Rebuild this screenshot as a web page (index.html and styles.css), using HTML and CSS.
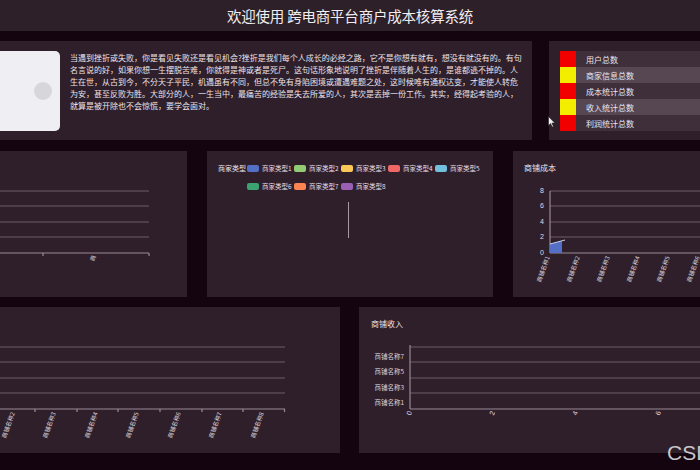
FILE: index.html
```html
<!DOCTYPE html>
<html lang="zh">
<head>
<meta charset="utf-8">
<title>跨电商平台商户成本核算系统</title>
<link rel="stylesheet" href="styles.css">
</head>
<body>
<header class="topbar"><h1 class="title">欢迎使用 跨电商平台商户成本核算系统</h1></header>
<main class="board">
  <section class="row row-1">
    <div class="panel intro">
      <div class="card"><span class="dot"></span></div>
      <p class="intro-text">当遇到挫折或失败，你是看见失败还是看见机会?挫折是我们每个人成长的必经之路，它不是你想有就有，想没有就没有的。有句名言说的好，如果你想一生摆脱苦难，你就得是神或者是死尸。这句话形象地说明了挫折是伴随着人生的，是谁都逃不掉的。人生在世，从古到今，不分天子平民，机遇虽有不同，但总不免有身陷困境或遭遇难题之处，这时候唯有通权达变，才能使人转危为安，甚至反败为胜。大部分的人，一生当中，最痛苦的经验是失去所爱的人，其次是丢掉一份工作。其实，经得起考验的人，就算是被开除也不会惊慌，要学会面对。</p>
    </div>
    <div class="panel stats">
      <ul class="stat-list">
        <li class="stat odd"><span class="mark red"></span><span class="stat-label">用户总数</span></li>
        <li class="stat even"><span class="mark yellow"></span><span class="stat-label">商家信息总数</span></li>
        <li class="stat odd"><span class="mark red"></span><span class="stat-label">成本统计总数</span></li>
        <li class="stat even"><span class="mark yellow"></span><span class="stat-label">收入统计总数</span></li>
        <li class="stat odd"><span class="mark red"></span><span class="stat-label">利润统计总数</span></li>
      </ul>
    </div>
  </section>

  <section class="row row-2">
    <div class="panel p21">
      <svg class="chart" width="207" height="146" viewBox="0 0 207 146">
        <g class="grid">
          <line x1="0" y1="40" x2="169" y2="40"/>
          <line x1="0" y1="55" x2="169" y2="55"/>
          <line x1="0" y1="71" x2="169" y2="71"/>
          <line x1="0" y1="86" x2="169" y2="86"/>
        </g>
        <g class="axis">
          <line x1="0" y1="102" x2="169" y2="102"/>
          <line x1="63" y1="102" x2="63" y2="105"/>
          <line x1="169" y1="102" x2="169" y2="105"/>
        </g>
        <text class="lbl" x="116" y="105" text-anchor="end" transform="rotate(-70 116 105)">商</text>
      </svg>
    </div>

    <div class="panel p22">
      <div class="legend">
        <span class="legend-title">商家类型</span>
        <div class="legend-items">
          <span class="li"><i class="sw c1"></i>商家类型1</span>
          <span class="li"><i class="sw c2"></i>商家类型2</span>
          <span class="li"><i class="sw c3"></i>商家类型3</span>
          <span class="li"><i class="sw c4"></i>商家类型4</span>
          <span class="li"><i class="sw c5"></i>商家类型5</span>
          <span class="li"><i class="sw c6"></i>商家类型6</span>
          <span class="li"><i class="sw c7"></i>商家类型7</span>
          <span class="li"><i class="sw c8"></i>商家类型8</span>
        </div>
      </div>
      <div class="pie-line"></div>
    </div>

    <div class="panel p23">
      <div class="ptitle">商铺成本</div>
      <svg class="chart" width="220" height="124" viewBox="0 0 220 124">
        <g class="grid">
          <line x1="37" y1="18" x2="220" y2="18"/>
          <line x1="37" y1="33" x2="220" y2="33"/>
          <line x1="37" y1="49" x2="220" y2="49"/>
          <line x1="37" y1="64" x2="220" y2="64"/>
        </g>
        <g class="axis">
          <line x1="37" y1="80" x2="220" y2="80"/>
          <line x1="37" y1="18" x2="37" y2="80"/>
        </g>
        <polygon points="37,80 37,71 49,68 49,80" fill="#5470c6"/>
        <line x1="37" y1="71" x2="52" y2="67" stroke="#c9d2f0" stroke-width="1"/>
        <g class="num">
          <text x="31" y="20" text-anchor="end">8</text>
          <text x="31" y="35" text-anchor="end">6</text>
          <text x="31" y="51" text-anchor="end">4</text>
          <text x="31" y="66" text-anchor="end">2</text>
          <text x="31" y="82" text-anchor="end">0</text>
        </g>
        <g class="lbl">
          <text x="37" y="84" text-anchor="end" transform="rotate(-70 37 84)">商铺名称1</text>
          <text x="67" y="84" text-anchor="end" transform="rotate(-70 67 84)">商铺名称2</text>
          <text x="97" y="84" text-anchor="end" transform="rotate(-70 97 84)">商铺名称3</text>
          <text x="127" y="84" text-anchor="end" transform="rotate(-70 127 84)">商铺名称4</text>
          <text x="157" y="84" text-anchor="end" transform="rotate(-70 157 84)">商铺名称5</text>
          <text x="187" y="84" text-anchor="end" transform="rotate(-70 187 84)">商铺名称6</text>
        </g>
      </svg>
    </div>
  </section>

  <section class="row row-3">
    <div class="panel p31">
      <svg class="chart" width="360" height="146" viewBox="0 0 360 146">
        <g class="grid">
          <line x1="0" y1="40" x2="305" y2="40"/>
          <line x1="0" y1="55" x2="305" y2="55"/>
          <line x1="0" y1="71" x2="305" y2="71"/>
          <line x1="0" y1="86" x2="305" y2="86"/>
        </g>
        <g class="axis">
          <line x1="0" y1="102" x2="305" y2="102"/>
          <line x1="55" y1="102" x2="55" y2="105"/>
          <line x1="97" y1="102" x2="97" y2="105"/>
          <line x1="138" y1="102" x2="138" y2="105"/>
          <line x1="180" y1="102" x2="180" y2="105"/>
          <line x1="222" y1="102" x2="222" y2="105"/>
          <line x1="263" y1="102" x2="263" y2="105"/>
          <line x1="304.5" y1="102" x2="304.5" y2="105"/>
        </g>
        <g class="lbl">
          <text x="35" y="106" text-anchor="end" transform="rotate(-70 35 106)">商铺名称2</text>
          <text x="76" y="106" text-anchor="end" transform="rotate(-70 76 106)">商铺名称3</text>
          <text x="118" y="106" text-anchor="end" transform="rotate(-70 118 106)">商铺名称4</text>
          <text x="159" y="106" text-anchor="end" transform="rotate(-70 159 106)">商铺名称5</text>
          <text x="201" y="106" text-anchor="end" transform="rotate(-70 201 106)">商铺名称6</text>
          <text x="242" y="106" text-anchor="end" transform="rotate(-70 242 106)">商铺名称7</text>
          <text x="284" y="106" text-anchor="end" transform="rotate(-70 284 106)">商铺名称8</text>
        </g>
      </svg>
    </div>

    <div class="panel p32">
      <div class="ptitle">商铺收入</div>
      <svg class="chart" width="360" height="124" viewBox="0 0 360 124">
        <g class="grid">
          <line x1="51" y1="18" x2="360" y2="18"/>
          <line x1="51" y1="33" x2="360" y2="33"/>
          <line x1="51" y1="49" x2="360" y2="49"/>
          <line x1="51" y1="64" x2="360" y2="64"/>
        </g>
        <g class="axis">
          <line x1="51" y1="80" x2="360" y2="80"/>
          <line x1="51" y1="16" x2="51" y2="80"/>
        </g>
        <g class="lbl lbl-y">
          <text x="45" y="30" text-anchor="end">商铺名称7</text>
          <text x="45" y="45" text-anchor="end">商铺名称5</text>
          <text x="45" y="61" text-anchor="end">商铺名称3</text>
          <text x="45" y="76" text-anchor="end">商铺名称1</text>
        </g>
        <g class="num">
          <text x="53" y="83" text-anchor="end" transform="rotate(-70 53 83)">0</text>
          <text x="136" y="83" text-anchor="end" transform="rotate(-70 136 83)">2</text>
          <text x="219" y="83" text-anchor="end" transform="rotate(-70 219 83)">4</text>
          <text x="302" y="83" text-anchor="end" transform="rotate(-70 302 83)">6</text>
        </g>
      </svg>
    </div>
  </section>
</main>
<svg class="cursor" width="8" height="12" viewBox="0 0 8 12"><path d="M0.5 0.5 L0.5 9.5 L2.6 7.6 L4.2 11 L5.4 10.4 L3.9 7.1 L6.8 7.1 Z" fill="#f4f4f4" stroke="#222" stroke-width="0.6"/></svg>
<div class="watermark">CSDN</div>
</body>
</html>
```

FILE: styles.css
```css
* { box-sizing: border-box; }
html, body {
  margin: 0;
  padding: 0;
}
body {
  width: 700px;
  height: 470px;
  overflow: hidden;
  background: #13040f;
  font-family: "Noto Sans CJK SC", "Noto Sans", sans-serif;
  color: #ece4ea;
  position: relative;
}
.topbar {
  height: 31px;
  background: #2d2029;
  display: flex;
  align-items: center;
  justify-content: center;
}
.title {
  margin: 0;
  font-size: 14.5px;
  font-weight: 400;
  color: #f1edf0;
  letter-spacing: -0.2px;
}
.board {
  width: 760px;
  margin-left: -20px;
  padding-top: 10px;
  display: flex;
  flex-direction: column;
}
.row { display: flex; }
.row-1 { height: 99px; gap: 17px; }
.row-2 { height: 146px; gap: 20px; margin-top: 11px; }
.row-3 { height: 146px; gap: 19px; margin-top: 10px; }
.panel {
  background: #2e1f2b;
  flex: none;
}
/* row 1 */
.intro {
  width: 552px;
  display: flex;
  align-items: flex-start;
  padding: 10px 0 0 10px;
}
.card {
  width: 70px;
  height: 80px;
  background: #efeef3;
  border-radius: 5px;
  display: flex;
  align-items: center;
  justify-content: flex-end;
  padding-right: 8px;
  flex: none;
}
.dot {
  width: 18px;
  height: 18px;
  border-radius: 50%;
  background: #d7d6db;
}
.intro-text {
  margin: 1px 0 0 10px;
  width: 452px;
  font-size: 8px;
  line-height: 11.9px;
  color: #ebe3e9;
}
.stats {
  width: 200px;
  padding: 10px 0 0 11px;
}
.stat-list { list-style: none; margin: 0; padding: 0; }
.stat {
  display: flex;
  align-items: center;
  height: 16px;
}
.stat.odd { background: #3e2f3b; }
.stat.even { background: #564752; }
.mark { width: 16px; height: 16px; flex: none; }
.mark.red { background: #f20000; }
.mark.yellow { background: #f3ee00; }
.stat-label {
  padding-left: 10px;
  font-size: 8px;
  color: #eee6ec;
}
/* charts */
.chart { display: block; }
.grid line { stroke: #6e5d6a; stroke-width: 1.2; }
.axis line { stroke: #9a8a96; stroke-width: 1.2; }
.lbl { font-family: "Noto Sans CJK SC", sans-serif; font-size: 6px; fill: #dcd3da; }
.num { font-family: "Liberation Sans", sans-serif; font-size: 7px; fill: #e2dae0; }
.lbl-y { font-size: 6.5px; }
.ptitle {
  height: 22px;
  padding: 12px 0 0 11px;
  font-size: 8px;
  line-height: 10px;
  color: #ece4ea;
}
.p21 { width: 207px; }
.p22 { width: 286px; }
.p23 { width: 220px; }
.p31 { width: 360px; }
.p32 { width: 360px; }
.p32 .ptitle { padding-left: 12px; }
/* legend */
.legend {
  display: flex;
  padding: 12px 0 0 11px;
}
.legend-title {
  width: 29px;
  font-size: 7px;
  line-height: 10px;
  white-space: nowrap;
  flex: none;
}
.legend-items {
  width: 240px;
  display: flex;
  flex-wrap: wrap;
  row-gap: 8px;
}
.li {
  width: 47px;
  height: 10px;
  display: flex;
  align-items: center;
  gap: 3px;
  font-size: 6.5px;
  color: #e6dee4;
  white-space: nowrap;
}
.sw { width: 12px; height: 7px; border-radius: 2px; flex: none; }
.c1 { background: #5470c6; }
.c2 { background: #91cc75; }
.c3 { background: #fac858; }
.c4 { background: #ee6666; }
.c5 { background: #73c0de; }
.c6 { background: #3ba272; }
.c7 { background: #fc8452; }
.c8 { background: #9a60b4; }
.pie-line {
  width: 1px;
  height: 36px;
  margin: 11px 0 0 141px;
  background: #a89aa4;
}
/* overlays */
.cursor {
  position: absolute;
  left: 548px;
  top: 116px;
}
.watermark {
  position: absolute;
  left: 667px;
  top: 442px;
  font-family: "Liberation Sans", sans-serif;
  font-size: 21px;
  line-height: 22px;
  color: #c9c6c9;
  white-space: nowrap;
}
```
